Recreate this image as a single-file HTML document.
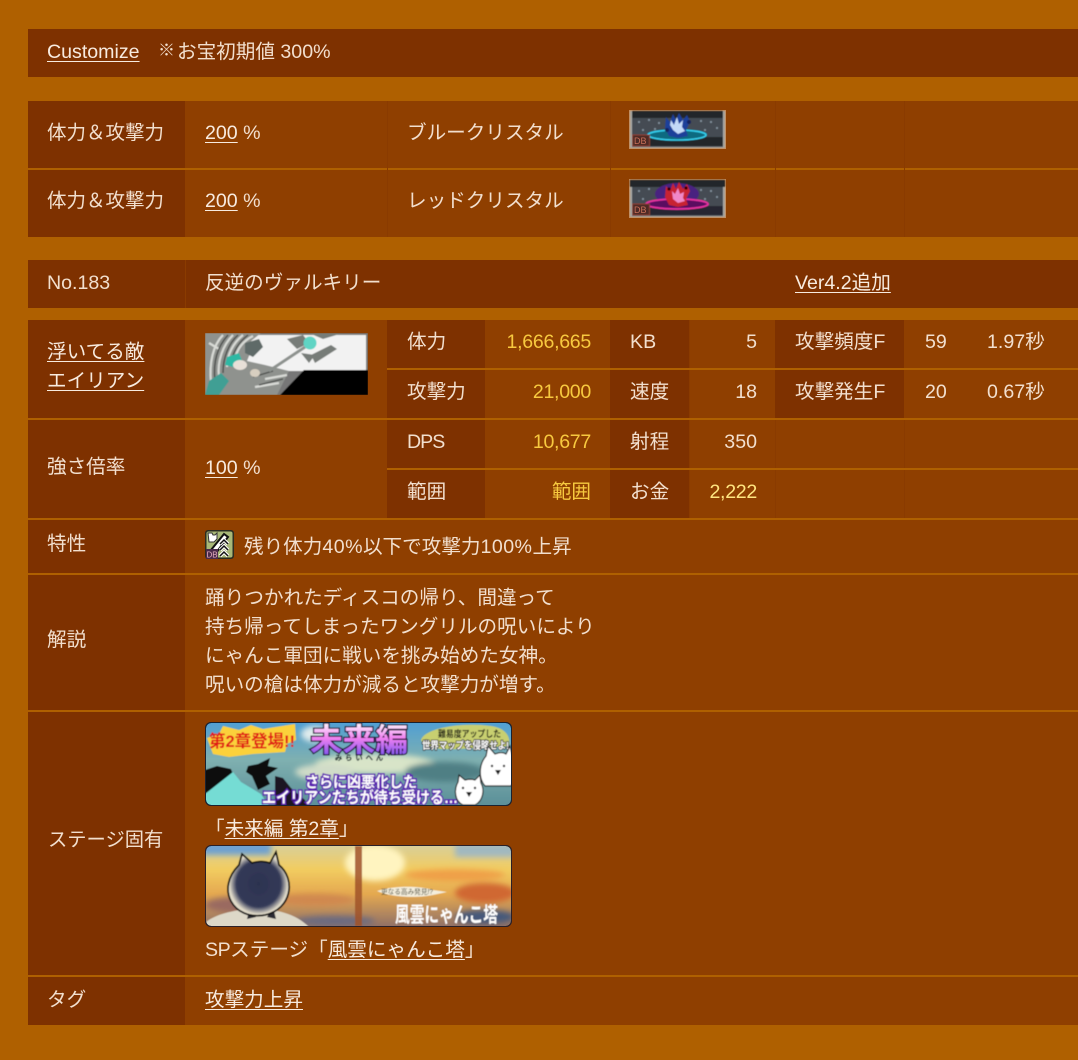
<!DOCTYPE html>
<html lang="ja"><head><meta charset="utf-8"><style>
html,body{margin:0;padding:0}
body{width:1078px;height:1060px;position:relative;overflow:hidden;background:#af6000;font-family:"Liberation Sans","Noto Sans CJK JP",sans-serif;font-size:19.6px;color:#f2dfce}
.b{position:absolute}
.d{background:#7e3100}
.m{background:#8f3f00}
.t{position:absolute;white-space:nowrap;line-height:28px}
.r{text-align:right}
.y{color:#f7c93f;letter-spacing:-.3px}
.y2{color:#ffe680;letter-spacing:-.3px}
a{color:#f8ebdf;text-decoration:underline;text-underline-offset:3px}
svg{position:absolute;display:block}
.w{letter-spacing:.45px}
</style></head><body>
<div class="b d" style="left:28px;top:29px;width:1050px;height:48px"></div>
<div class="t" style="left:47px;top:38px"><a>Customize</a></div>
<div class="t" style="left:158px;top:37px;font-size:17px">※</div>
<div class="t" style="left:177px;top:38px">お宝初期値 300%</div>

<div class="b d" style="left:28px;top:101px;width:157px;height:67px"></div>
<div class="b m" style="left:185px;top:101px;width:893px;height:67px"></div>
<div class="b d" style="left:28px;top:170px;width:157px;height:67px"></div>
<div class="b m" style="left:185px;top:170px;width:893px;height:67px"></div>
<div class="b" style="left:387px;top:101px;width:1px;height:136px;background:#8a3b00"></div>
<div class="b" style="left:610px;top:101px;width:1px;height:136px;background:#8a3b00"></div>
<div class="b" style="left:775px;top:101px;width:1px;height:136px;background:#8a3b00"></div>
<div class="b" style="left:904px;top:101px;width:1px;height:136px;background:#8a3b00"></div>
<div class="t" style="left:47px;top:119px;font-size:19.5px">体力＆攻撃力</div>
<div class="t" style="left:205px;top:119px"><a>200</a> %</div>
<div class="t" style="left:407px;top:119px">ブルークリスタル</div>
<div class="t" style="left:47px;top:187px;font-size:19.5px">体力＆攻撃力</div>
<div class="t" style="left:205px;top:187px"><a>200</a> %</div>
<div class="t" style="left:407px;top:187px">レッドクリスタル</div>

<svg width="0" height="0" style="left:0;top:0"><defs>
<filter id="bl" x="-5%" y="-5%" width="110%" height="110%"><feGaussianBlur stdDeviation=".6"/></filter>
<filter id="bl1" x="-5%" y="-5%" width="110%" height="110%"><feGaussianBlur stdDeviation=".45"/></filter>
<filter id="bl2" x="-20%" y="-20%" width="140%" height="140%"><feGaussianBlur stdDeviation="3"/></filter>
</defs></svg>

<svg style="left:629px;top:110px" width="97" height="39" viewBox="0 0 97 39">
<rect width="97" height="39" fill="#c48a58"/>
<g filter="url(#bl)"><rect x="1" y="1" width="95" height="37" fill="#a8a8a4"/><rect x="3" y="2" width="91" height="35" fill="#454b52"/>
<rect x="3" y="1" width="91" height="7" fill="#23282c"/><rect x="3" y="27" width="91" height="9" fill="#23282c"/>
<g fill="#8a99a4"><circle cx="10" cy="12" r="1"/><circle cx="20" cy="10" r="1"/><circle cx="30" cy="13" r="1"/><circle cx="14" cy="20" r="1"/><circle cx="26" cy="19" r="1"/><circle cx="72" cy="11" r="1"/><circle cx="82" cy="12" r="1"/><circle cx="88" cy="18" r="1"/><circle cx="76" cy="20" r="1"/></g>
<ellipse cx="48" cy="24" rx="30" ry="5" fill="#0c6a80"/><ellipse cx="48" cy="25" rx="29" ry="5" fill="none" stroke="#35d0f0" stroke-width="1.6"/>
<path d="M37 7l4 5 3-8 3 6 3-7 4 7 4-5 3 7-4 8 2 6-10 2-9-2-4-8z" fill="#1f3f9a"/>
<path d="M42 10l3 5 3-8 2 7 4-4-1 7 3 4-7 3-5-4-3-5z" fill="#c4daf8"/><circle cx="38" cy="20" r="2" fill="#13245c"/><circle cx="60" cy="12" r="2" fill="#13245c"/>
<rect x="3.500" y="25" width="17" height="11" fill="#4e2c26" stroke="#8e4030"/></g>
<text x="5" y="34" font-size="9" fill="#c87058" font-family="Liberation Sans">DB</text></svg>
<svg style="left:629px;top:179px" width="97" height="39" viewBox="0 0 97 39">
<rect width="97" height="39" fill="#c48a58"/>
<g filter="url(#bl)"><rect x="1" y="1" width="95" height="37" fill="#a8a8a4"/><rect x="3" y="2" width="91" height="35" fill="#454b52"/>
<rect x="1" y="1" width="95" height="7" fill="#23282c"/><rect x="3" y="27" width="91" height="9" fill="#262830"/>
<g fill="#8a99a4"><circle cx="10" cy="12" r="1"/><circle cx="20" cy="10" r="1"/><circle cx="30" cy="13" r="1"/><circle cx="14" cy="20" r="1"/><circle cx="72" cy="11" r="1"/><circle cx="82" cy="12" r="1"/><circle cx="88" cy="18" r="1"/><circle cx="76" cy="20" r="1"/></g>
<ellipse cx="48" cy="15" rx="22" ry="11" fill="#4a2080"/><ellipse cx="48" cy="25" rx="31" ry="5" fill="#5a1060"/><ellipse cx="48" cy="25" rx="31" ry="5" fill="none" stroke="#e830a0" stroke-width="1.800"/>
<path d="M37 7l4 5 3-8 3 6 3-7 4 7 4-5 3 7-4 8 2 6-10 2-9-2-4-8z" fill="#c82030"/>
<path d="M43 12l3 3 3-6 2 6 4-2-1 6 2 3-7 2-5-4z" fill="#f088c8"/><circle cx="40" cy="10" r="1.600" fill="#300"/><circle cx="57" cy="9" r="1.600" fill="#300"/>
<rect x="3.500" y="25" width="17" height="11" fill="#4e2c26" stroke="#8e4030"/></g>
<text x="5" y="34" font-size="9" fill="#c87058" font-family="Liberation Sans">DB</text></svg>

<div class="b d" style="left:28px;top:260px;width:1050px;height:48px"></div>
<div class="b" style="left:185px;top:260px;width:1px;height:48px;background:#8a3b00"></div>
<div class="t" style="left:47px;top:269px">No.183</div>
<div class="t" style="left:205px;top:269px">反逆のヴァルキリー</div>
<div class="t" style="left:795px;top:269px"><a>Ver4.2追加</a></div>

<!-- main table -->
<div class="b m" style="left:28px;top:320px;width:1050px;height:705px"></div>
<div class="b d" style="left:28px;top:320px;width:157px;height:705px"></div>
<div class="b d" style="left:387px;top:320px;width:98px;height:198px"></div>
<div class="b d" style="left:610px;top:320px;width:79px;height:198px"></div>
<div class="b d" style="left:775px;top:320px;width:129px;height:98px"></div>
<div class="b" style="left:904px;top:420px;width:1px;height:98px;background:#8a3b00"></div>
<div class="b" style="left:689px;top:320px;width:1px;height:198px;background:#8a3b00"></div>
<div class="b" style="left:775px;top:420px;width:1px;height:98px;background:#8a3b00"></div>
<!-- row lines -->
<div class="b" style="left:387px;top:368px;width:691px;height:2px;background:#af6000"></div>
<div class="b" style="left:28px;top:418px;width:1050px;height:2px;background:#af6000"></div>
<div class="b" style="left:387px;top:468px;width:691px;height:2px;background:#af6000"></div>
<div class="b" style="left:28px;top:518px;width:1050px;height:2px;background:#af6000"></div>
<div class="b" style="left:28px;top:573px;width:1050px;height:2px;background:#af6000"></div>
<div class="b" style="left:28px;top:710px;width:1050px;height:2px;background:#af6000"></div>
<div class="b" style="left:28px;top:975px;width:1050px;height:2px;background:#af6000"></div>

<div class="t" style="left:47px;top:338px"><a>浮いてる敵</a></div>
<div class="t" style="left:47px;top:367px"><a>エイリアン</a></div>
<svg style="left:205px;top:333px" width="163" height="62" viewBox="0 0 163 62">
<g filter="url(#bl)"><rect width="163" height="62" fill="#777"/><rect x="1" y="2" width="160" height="36" fill="#f2f2f2"/>
<polygon points="75,62 99,37 163,37 163,62" fill="#000"/>
<polygon points="0,0 56,0 46,8 46,18 42,28 60,32 84,38 72,62 0,62" fill="#8f928e"/>
<g fill="none" stroke="#d8dad6" stroke-width="2.200"><path d="M6 50C4 30 8 12 18 2"/><path d="M14 44C12 28 18 12 28 2"/><path d="M22 34C22 22 28 10 38 2"/><path d="M30 26C32 16 38 8 48 3"/><path d="M60 46l22-4"/><path d="M50 54l24-4"/><path d="M4 10l10 6"/></g>
<g fill="none" stroke="#4b4e4c" stroke-width="1.400"><path d="M10 48C8 30 12 14 23 2"/><path d="M18 40C18 24 24 10 33 2"/><path d="M26 30C28 18 34 9 43 2"/><path d="M54 52l24-6"/><path d="M48 44l20-6"/></g>
<polygon points="0,62 4,48 16,40 24,48 14,62" fill="#3f9f94"/><polygon points="22,24 34,20 38,30 28,34 20,32" fill="#2fb8a4"/>
<polygon points="40,10 54,6 58,14 48,24 40,20" fill="#5f6a68"/><ellipse cx="35" cy="32" rx="7" ry="5" fill="#e8e0d8"/><ellipse cx="50" cy="40" rx="5" ry="4" fill="#d8cfc0"/>
<line x1="64" y1="38" x2="100" y2="14" stroke="#8d928e" stroke-width="3"/>
<g fill="#777c78"><path d="M82 6l16-4 6 8-12 6z"/><path d="M104 0h34l-20 6z"/><path d="M106 22l20-10 6 4-22 14z"/><path d="M96 20l8 10 6-8z"/></g>
<circle cx="105" cy="10" r="6.500" fill="#5fd4c4"/></g></svg>
<div class="t" style="left:47px;top:453px">強さ倍率</div>
<div class="t" style="left:205px;top:454px"><a>100</a> %</div>

<div class="t" style="left:407px;top:328px">体力</div>
<div class="t" style="left:407px;top:378px">攻撃力</div>
<div class="t" style="left:407px;top:428px;letter-spacing:-1px">DPS</div>
<div class="t" style="left:407px;top:478px">範囲</div>
<div class="t r y" style="right:487px;top:328px">1,666,665</div>
<div class="t r y" style="right:487px;top:378px">21,000</div>
<div class="t r y" style="right:487px;top:428px">10,677</div>
<div class="t r y" style="right:487px;top:478px;letter-spacing:0">範囲</div>
<div class="t" style="left:630px;top:328px">KB</div>
<div class="t" style="left:630px;top:378px">速度</div>
<div class="t" style="left:630px;top:428px">射程</div>
<div class="t" style="left:630px;top:478px">お金</div>
<div class="t r" style="right:321px;top:328px">5</div>
<div class="t r" style="right:321px;top:378px">18</div>
<div class="t r" style="right:321px;top:428px">350</div>
<div class="t r y2" style="right:321px;top:478px">2,222</div>
<div class="t" style="left:795px;top:328px">攻撃頻度F</div>
<div class="t" style="left:795px;top:378px">攻撃発生F</div>
<div class="t" style="left:925px;top:328px">59</div>
<div class="t" style="left:925px;top:378px">20</div>
<div class="t" style="left:987px;top:328px">1.97秒</div>
<div class="t" style="left:987px;top:378px">0.67秒</div>

<div class="t" style="left:47px;top:530px">特性</div>
<svg style="left:205px;top:530px" width="29" height="29" viewBox="0 0 29 29">
<rect width="29" height="29" rx="3" fill="#2c2c20"/><rect x="1.500" y="1.500" width="26" height="26" rx="2" fill="#a8b878"/>
<path d="M3 3h4l1 2h2l2-2v6l-3 3H4z" fill="#fff" stroke="#333"/>
<path d="M6 20L19 4l4 3L11 23z" fill="#fff" stroke="#111" stroke-width="2"/>
<path d="M15 14l4-4 4 4M15 20l4-4 4 4M15 26l4-4 4 4" fill="none" stroke="#fff" stroke-width="3.500"/>
<path d="M15 14l4-4 4 4M15 20l4-4 4 4M15 26l4-4 4 4" fill="none" stroke="#111" stroke-width="1.500"/>
<rect x="1" y="19" width="12" height="10" fill="#4a2a4a"/><text x="1.500" y="27.500" font-size="8" fill="#e8b0c0" font-family="Liberation Sans">DB</text></svg>
<div class="t" style="left:244px;top:533px">残り体力<span class="w">40%</span>以下で攻撃力<span class="w">100%</span>上昇</div>

<div class="t" style="left:47px;top:626px">解説</div>
<div class="t" style="left:205px;top:584px;line-height:29px;white-space:pre">踊りつかれたディスコの帰り、間違って
持ち帰ってしまったワングリルの呪いにより
にゃんこ軍団に戦いを挑み始めた女神。
呪いの槍は体力が減ると攻撃力が増す。</div>

<div class="t" style="left:48px;top:827px;font-size:19.3px">ステージ固有</div>
<svg style="left:205px;top:722px" width="307" height="84" viewBox="0 0 307 84">
<defs><linearGradient id="f" x1="0" y1="0" x2="0" y2="1"><stop offset="0" stop-color="#4f9fd4"/><stop offset=".45" stop-color="#7fb0b0"/><stop offset="1" stop-color="#5b8f98"/></linearGradient>
<linearGradient id="tt" x1="0" y1="0" x2="0" y2="1"><stop offset="0" stop-color="#fff"/><stop offset=".45" stop-color="#f080f0"/><stop offset="1" stop-color="#7050f0"/></linearGradient></defs>
<clipPath id="cp1"><rect x="1" y="1" width="305" height="82" rx="5"/></clipPath>
<rect width="307" height="84" rx="6" fill="#1a2230"/>
<g clip-path="url(#cp1)"><g filter="url(#bl1)"><rect width="307" height="84" fill="url(#f)"/>
<g filter="url(#bl2)"><ellipse cx="170" cy="42" rx="60" ry="10" fill="#d8e4c8"/><ellipse cx="240" cy="50" rx="40" ry="10" fill="#4f7f84"/><ellipse cx="120" cy="50" rx="30" ry="8" fill="#d0dcc8"/><ellipse cx="110" cy="12" rx="14" ry="8" fill="#e0ecec"/></g>
<polygon points="2,16 14,12 18,4 34,8 46,3 58,7 90,2 91,18 82,22 80,30 48,32 24,35 8,32 5,24" fill="#fbd13a"/>
<text x="4" y="25" font-size="17" font-weight="bold" fill="#e01818" textLength="86" lengthAdjust="spacingAndGlyphs">第2章登場!!</text>
<text x="105" y="29" font-size="32" font-weight="bold" fill="url(#tt)" stroke="#1a1030" stroke-width="2.500" textLength="98" lengthAdjust="spacingAndGlyphs" style="paint-order:stroke">未来編</text>
<text x="130" y="38" font-size="7" fill="#fff" stroke="#203030" stroke-width=".6" textLength="48">みらいへん</text>
<path d="M216 18c4-12 40-18 70-14 14 2 20 10 18 20l-50 3c-16 1-34 0-38-9z" fill="#c8cf70"/>
<text x="233" y="15" font-size="9" font-weight="bold" fill="#1c1c14" textLength="63" lengthAdjust="spacingAndGlyphs">難易度アップした</text>
<text x="217" y="27" font-size="10" font-weight="bold" fill="#fff" stroke="#222" stroke-width="1.600" textLength="87" lengthAdjust="spacingAndGlyphs" style="paint-order:stroke">世界マップを侵略せよ!</text>
<path d="M0 48l12-4 14 3 4 10-8 14-22 2z" fill="#0d0d0d"/>
<path d="M43 44l10-2 12-6-2 8 10 2-12 8 4 8-12 6-6-14-6-4z" fill="#0d0d0d"/>
<path d="M70 54l8 2 8 10 14 12 2 6H70z" fill="#1a1420"/>
<path d="M0 72L28 50l8 10 20 12 8 12H0z" fill="#74dcd4"/>
<text x="100" y="65" font-size="15" font-weight="bold" fill="#fff" stroke="#5a1ab0" stroke-width="3" textLength="112" lengthAdjust="spacingAndGlyphs" style="paint-order:stroke">さらに凶悪化した</text>
<text x="57" y="81" font-size="16" font-weight="bold" fill="#fff" stroke="#5a1ab0" stroke-width="3" textLength="196" lengthAdjust="spacingAndGlyphs" style="paint-order:stroke">エイリアンたちが待ち受ける…</text>
<path d="M281 34l2-10 7 8c5-2 8-2 11 0l4-8 3 12c4 8 4 20-2 28l-26 0c-7-8-6-22 1-30z" fill="#fff" stroke="#222" stroke-width="1.200"/>
<path d="M253 60l1-7 6 5c4-1 7-1 10 0l5-5 1 8c4 7 2 18-6 22h-12c-9-4-9-16-5-23z" fill="#fff" stroke="#222" stroke-width="1.200"/>
<g fill="#222"><circle cx="258" cy="66" r="1.200"/><circle cx="270" cy="66" r="1.200"/><circle cx="287" cy="44" r="1.200"/><circle cx="299" cy="44" r="1.200"/><path d="M261 70h6l-3 5zM290 48h6l-3 5z"/></g></g></g>
<rect x=".5" y=".5" width="306" height="83" rx="6" fill="none" stroke="#1a2230"/></svg>
<div class="t" style="left:205px;top:815px">「<a>未来編 第2章</a>」</div>
<svg style="left:205px;top:845px" width="307" height="82" viewBox="0 0 307 82">
<defs><linearGradient id="s" x1="0" y1="0" x2="0" y2="1"><stop offset="0" stop-color="#d8cf9a"/><stop offset=".3" stop-color="#f2cc60"/><stop offset=".6" stop-color="#e4a850"/><stop offset="1" stop-color="#8f7068"/></linearGradient>
<radialGradient id="k" cx=".5" cy=".5" r=".5"><stop offset="0" stop-color="#2c3350"/><stop offset=".72" stop-color="#343a58"/><stop offset=".95" stop-color="#e0dac8"/></radialGradient></defs>
<clipPath id="cp2"><rect x="1" y="1" width="305" height="80" rx="5"/></clipPath>
<rect width="307" height="82" rx="6" fill="#2a2028"/>
<g clip-path="url(#cp2)"><g filter="url(#bl1)"><rect width="307" height="82" fill="url(#s)"/>
<g filter="url(#bl2)"><rect x="-4" y="-4" width="70" height="14" fill="#6ea0d0"/><rect x="250" y="-2" width="60" height="14" fill="#a0b8c0"/>
<ellipse cx="170" cy="18" rx="30" ry="18" fill="#fff4c0"/><ellipse cx="250" cy="30" rx="50" ry="6" fill="#f09040" opacity=".7"/>
<ellipse cx="30" cy="60" rx="30" ry="8" fill="#9a6a60"/><ellipse cx="280" cy="48" rx="30" ry="10" fill="#d06830"/><ellipse cx="110" cy="55" rx="40" ry="6" fill="#d08850"/><ellipse cx="130" cy="76" rx="40" ry="5" fill="#6a6a80"/><ellipse cx="280" cy="72" rx="30" ry="7" fill="#45587a"/></g>
<rect x="150" y="1" width="7" height="80" fill="#a05228" opacity=".85"/>
<path d="M0 78c8-8 30-14 50-14s40 4 54 18H0z" fill="#ddd8c8"/>
<path d="M45 62l-3 12 9-2zM68 62l3 12-9-2z" fill="#2a2a30"/>
<path d="M34 20l3-11 10 9c6-2 12-2 18 0l6-11 3 13c17 14 13 44-14 50-32 6-50-26-26-50z" fill="url(#k)" stroke="#111" stroke-width="1.800"/>
<path d="M172 46c18-6 44-5 56-1l14 2-14 3c-14 3-40 3-56-4z" fill="#f4eedc"/>
<text x="176" y="49" font-size="7" fill="#443" textLength="52" lengthAdjust="spacingAndGlyphs">更なる高み発見!?</text>
<text x="190" y="77" font-size="21" font-weight="bold" fill="#fff" textLength="103" lengthAdjust="spacingAndGlyphs">風雲にゃんこ塔</text></g></g>
<rect x=".5" y=".5" width="306" height="81" rx="6" fill="none" stroke="#2a2028"/></svg>
<div class="t" style="left:205px;top:936px"><span style="letter-spacing:-.5px">SP</span>ステージ「<a>風雲にゃんこ塔</a>」</div>

<div class="t" style="left:47px;top:986px">タグ</div>
<div class="t" style="left:205px;top:986px"><a>攻撃力上昇</a></div>
</body></html>
